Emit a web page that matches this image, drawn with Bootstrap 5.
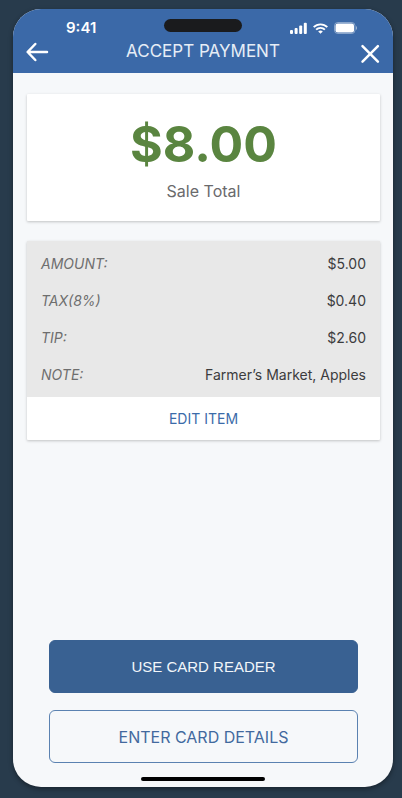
<!DOCTYPE html>
<html lang="en">
<head>
<meta charset="utf-8">
<meta name="viewport" content="width=device-width, initial-scale=1">
<title>Accept Payment</title>
<link href="https://cdn.jsdelivr.net/npm/bootstrap@5.3.0/dist/css/bootstrap.min.css" rel="stylesheet">
<style>
  body { background: #283b4c; font-family: Inter, "Liberation Sans", sans-serif; font-size: 15px; line-height: 20px; }
  .stage { padding: 9px 9px 11px 13px; }
  .phone { background: #f6f8fa; border-radius: 28px; box-shadow: 0 2px 5px rgba(0, 0, 0, .4); }
  .topbar { background: #3b69a8; color: #fff; padding: 9px 12px 7px; }
  .status-grid { display: grid; grid-template-columns: 1fr 78px 1fr; height: 20px; }
  .clock { font-weight: 600; padding-left: 41px; }
  .island { height: 13px; background: #1a1b1d; margin-top: 1px; }
  .signals { padding-right: 24px; gap: 6px; }
  .title-row { height: 28px; }
  .title-row h1 { font-size: 17px; line-height: 24px; font-weight: 400; color: #e6edf6; padding-bottom: 2px; }
  .icon-btn { width: 24px; height: 24px; }
  .icon-btn svg { overflow: visible; }
  .content { padding: 21px 13px 0 14px; gap: 20px; }
  .panel { border-radius: 1px; box-shadow: 0 1px 3px rgba(0, 0, 0, .22); }
  .total { padding: 20px 16px 18px; color: #5a8540; }
  .total-sum { font-size: 50px; line-height: 60px; font-weight: 700; }
  .total-label { font-size: 16px; line-height: 24px; color: #6a6a6c; padding-top: 5px; }
  .items { background: #e8e8e8; padding: 4px 14px; }
  .item { height: 37px; }
  .item dt { font-size: 14px; font-weight: 400; font-style: italic; color: #6e6e6e; }
  .item dd { font-size: 14px; color: #3c3c3e; }
  .edit { height: 43px; font-size: 14px; color: #3b6ba9; }
  .actions { padding: 20px 35px 14px 36px; gap: 17px; }
  .action { height: 53px; border-radius: 6px; border-color: #5b82b1; font-size: 16px; color: #42699e; }
  .action:hover { border-color: #396192; color: #396192; }
  .action-main, .action-main:hover { background: #396192; border-color: #396192; color: #f2f6fa; font-family: "Liberation Sans", Arial, sans-serif; font-size: 15px; }
  .action span { display: block; padding-top: 1px; }
  .home-bar { width: 124px; height: 4px; background: #000; margin-bottom: 6px; }
</style>
<script src="https://cdn.jsdelivr.net/npm/bootstrap@5.3.0/dist/js/bootstrap.bundle.min.js"></script>
</head>
<body>
<div class="stage min-vh-100 d-flex">
  <div class="phone flex-grow-1 d-flex flex-column overflow-hidden">
    <header class="topbar">
      <div class="status-grid">
        <div class="clock">9:41</div>
        <div class="island rounded-pill"></div>
        <div class="signals d-flex align-items-center justify-content-end">
          <svg width="17" height="12" viewBox="0 0 17 12" fill="#fff" aria-label="Signal" role="img"><rect x="0" y="8" width="3" height="4" rx="1"/><rect x="4.6" y="6" width="3" height="6" rx="1"/><rect x="9.2" y="3.5" width="3" height="8.500" rx="1"/><rect x="13.800" y="0.800" width="3" height="11.200" rx="1"/></svg>
          <svg width="15" height="11" viewBox="0 0 15 11" fill="none" stroke="#fff" stroke-width="1.900" aria-label="Wi-Fi" role="img"><path d="M.7 4.200a9.600 9.600 0 0 1 13.600 0M3.100 6.700a6.200 6.200 0 0 1 8.800 0"/><path d="M7.500 10.800 5.200 8.500a3.300 3.300 0 0 1 4.600 0Z" fill="#fff" stroke="none"/></svg>
          <svg width="23" height="12" viewBox="0 0 23 12" aria-label="Battery" role="img"><rect x=".5" y=".5" width="20.500" height="11" rx="3.300" fill="none" stroke="#fff" stroke-opacity=".4"/><rect x="1.500" y="1.500" width="18.500" height="9" rx="2.300" fill="#fff"/><path d="M22 4v4q1-.6 1-2t-1-2Z" fill="#fff" fill-opacity=".5"/></svg>
        </div>
      </div>
      <div class="title-row d-flex align-items-center justify-content-between">
        <button type="button" class="icon-btn btn border-0 p-0 d-flex" aria-label="Back">
          <svg width="24" height="24" viewBox="0 0 24 24" fill="none" stroke="#fff" stroke-width="2.500" stroke-linecap="round" stroke-linejoin="round"><path d="M10.300 4 2.600 12l7.700 8M2.800 12h19.200"/></svg>
        </button>
        <h1 class="m-0">ACCEPT PAYMENT</h1>
        <button type="button" class="icon-btn btn border-0 p-0 d-flex" aria-label="Close">
          <svg width="24" height="24" viewBox="0 0 24 24" fill="none" stroke="#fff" stroke-width="2.500" stroke-linecap="round"><path d="m5.500 6.200 15.400 15.400M20.900 6.200 5.500 21.600"/></svg>
        </button>
      </div>
    </header>

    <main class="content d-flex flex-column">
      <section class="panel total bg-white text-center">
        <div class="total-sum">$8.00</div>
        <div class="total-label">Sale Total</div>
      </section>
      <section class="panel bg-white">
        <dl class="items m-0">
          <div class="item d-flex align-items-center justify-content-between"><dt>AMOUNT:</dt><dd class="m-0">$5.00</dd></div>
          <div class="item d-flex align-items-center justify-content-between"><dt>TAX(8%)</dt><dd class="m-0">$0.40</dd></div>
          <div class="item d-flex align-items-center justify-content-between"><dt>TIP:</dt><dd class="m-0">$2.60</dd></div>
          <div class="item d-flex align-items-center justify-content-between"><dt>NOTE:</dt><dd class="m-0">Farmer’s Market, Apples</dd></div>
        </dl>
        <button type="button" class="edit btn border-0 rounded-0 w-100 p-0">EDIT ITEM</button>
      </section>
    </main>

    <div class="actions d-flex flex-column mt-auto">
      <button type="button" class="action action-main btn p-0"><span>USE CARD READER</span></button>
      <button type="button" class="action btn p-0"><span>ENTER CARD DETAILS</span></button>
    </div>
    <div class="home-bar rounded-pill mx-auto"></div>
  </div>
</div>
</body>
</html>
